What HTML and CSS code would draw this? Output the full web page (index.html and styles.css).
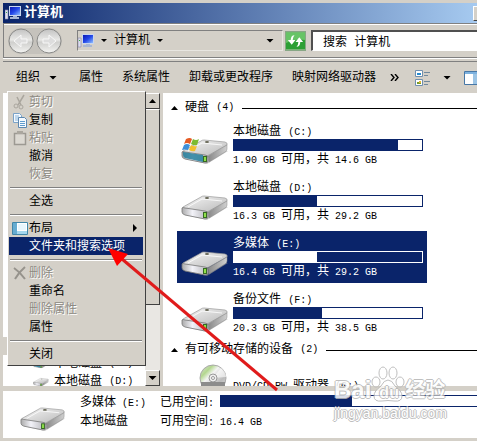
FILE: index.html
```html
<!DOCTYPE html>
<html lang="zh-CN">
<head>
<meta charset="utf-8">
<title>计算机</title>
<link rel="stylesheet" href="styles.css">
</head>
<body>
<svg class="defs" aria-hidden="true">
  <defs>
    <linearGradient id="top" x1="0" y1="0" x2="1" y2="1"><stop offset="0" stop-color="#f6f6f6"/><stop offset="1" stop-color="#b9b9b9"/></linearGradient>
    <linearGradient id="front" x1="0" y1="0" x2="1" y2="0"><stop offset="0" stop-color="#aaa"/><stop offset=".4" stop-color="#f2f2f8"/><stop offset="1" stop-color="#b4b4b8"/></linearGradient>
    <linearGradient id="side" x1="0" y1="0" x2="1" y2="0"><stop offset="0" stop-color="#888"/><stop offset="1" stop-color="#d0d0d0"/></linearGradient>
    <linearGradient id="screen" x1="0" y1="0" x2="1" y2="1"><stop offset="0" stop-color="#0b19b4"/><stop offset=".5" stop-color="#2448e8"/><stop offset="1" stop-color="#8fc0ff"/></linearGradient>
    <linearGradient id="round" x1="0" y1="0" x2="0" y2="1"><stop offset="0" stop-color="#c2c2c2"/><stop offset=".45" stop-color="#e8e8e6"/><stop offset=".55" stop-color="#cfcfcd"/><stop offset="1" stop-color="#f4f4f2"/></linearGradient>
    <linearGradient id="disc" x1="0" y1="0" x2="1" y2="1"><stop offset="0" stop-color="#ddd"/><stop offset=".25" stop-color="#b4d890"/><stop offset=".4" stop-color="#f4f4f4"/><stop offset=".7" stop-color="#bbb"/><stop offset="1" stop-color="#e4e4e4"/></linearGradient>
    <symbol id="drive" viewBox="0 0 48 26">
      <path d="M4 21l22 5 21-13-3 0-18 9z" fill="#999" opacity=".5"/>
      <path d="M2 13 20 3q1-1 3-1l21 2q3 1 2 3L28 17q-2 1-4 1L3 15q-2-1-1-2z" fill="url(#top)" stroke="#999" stroke-width=".7"/>
      <path d="M1 14q1-1 3 0l20 3q3 0 3 3v3q0 2-3 2L4 21q-3-1-3-3z" fill="url(#front)" stroke="#777" stroke-width=".8"/>
      <path d="M27 18 46 7v4q0 2-2 3L28 24z" fill="url(#side)" stroke="#888" stroke-width=".5"/>
      <path d="M7 13 21 5l20 2" fill="none" stroke="#fff" opacity=".8"/>
      <ellipse cx="26" cy="4" rx="2" ry="1" fill="#665"/>
      <path d="M22 18h4v6h-4z" fill="#356a22"/><path d="M23 19h2v4h-2z" fill="#8fe04a"/>
    </symbol>
    <symbol id="windrive" viewBox="0 0 48 26">
      <use href="#drive" width="48" height="26"/>
      <path d="M2 14l20 3v7L4 20q-2-1-2-3z" fill="#257f9c" opacity=".85"/>
      <path d="M5 1q4-2 6 0L9 6Q6 4 3 6z" fill="#e65b24"/><path d="M12 1q3 2 6 0l-2 6q-3 1-6-1z" fill="#7cbb32"/>
      <path d="M3 7q3-2 6 0l-2 5q-3-1-6 0z" fill="#3e8fd8"/><path d="M10 7q3 2 6 1l-2 5q-3 1-6-1z" fill="#f2c02e"/>
    </symbol>
    <symbol id="pc" viewBox="0 0 16 14">
      <path d="M0 4h3v9H0z" fill="#dde" stroke="#88a" stroke-width=".6"/><path d="M1 6h1v1H1z" fill="#3a4"/>
      <path d="M4 0h12v10H4z" fill="#c9d6ee"/><path d="M5 1h10v8H5z" fill="url(#screen)"/>
      <path d="M8 10h4v1h2v2H5v-2h3z" fill="#a9b7d2"/>
    </symbol>
  </defs>
</svg>
<div class="window">
  <header class="title">
    <svg class="pc"><use href="#pc"/></svg>
    <h1>计算机</h1>
    <button class="minimize" aria-label="最小化"></button>
  </header>

  <nav class="nav">
    <div class="history">
      <button aria-label="后退"><svg viewBox="0 0 26 26"><circle cx="13" cy="13" r="12" fill="url(#round)" stroke="#8b8b89"/><path d="M19 11h-6V7l-7 6 7 6v-4h6z" fill="#ddd" stroke="#f8f8f8"/></svg></button>
      <button aria-label="前进"><svg viewBox="0 0 26 26"><circle cx="13" cy="13" r="12" fill="url(#round)" stroke="#8b8b89"/><path d="M7 11h6V7l7 6-7 6v-4H7z" fill="#ddd" stroke="#f8f8f8"/></svg></button>
    </div>
    <div class="address">
      <svg class="pc"><use href="#pc"/></svg>
      <i class="caret small"></i>
      <a href="#">计算机</a>
      <i class="caret small"></i>
      <i class="caret last"></i>
    </div>
    <button class="refresh" aria-label="刷新">
      <svg viewBox="0 0 20 18"><path d="M0 0h20v18H0z" fill="#2c9f35"/><path d="M0 0h20v8Q10 6 0 11z" fill="#67c466"/><path d="M9 3Q5 3 5 8H2l4 5 4-5H7q0-3 2-5zM11 15q4 0 4-5h3l-4-5-4 5h3q0 3-2 5z" fill="#fff"/></svg>
    </button>
    <input class="search" aria-label="搜索" value="搜索 计算机">
  </nav>

  <div class="toolbar">
    <button class="organize">组织<i class="caret"></i></button>
    <button>属性</button>
    <button>系统属性</button>
    <button>卸载或更改程序</button>
    <button>映射网络驱动器</button>
    <button class="more" aria-label="更多"><svg viewBox="0 0 9 7"><path d="M1 0l3 3.500-3 3.500M5 0l3 3.500-3 3.500" fill="none" stroke="#000" stroke-width="1.400"/></svg></button>
    <button class="views" aria-label="更改视图">
      <svg viewBox="0 0 16 16"><path d="M.5.500h7v6h-7zM.5 9.500h7v6h-7z" fill="#fff" stroke="#6f8fae"/><path d="M2 3h4v2H2z" fill="#278bd0"/><path d="M2 12h4v2H2z" fill="#789c28"/><path d="M4 11h2v2H4z" fill="#e1b631"/><path d="M9 2.500h6M9 5.500h4M9 11.500h6M9 14.500h4" stroke="#71899d"/></svg>
      <i class="caret"></i>
    </button>
    <button class="preview" aria-label="预览窗格"><svg viewBox="0 0 16 14"><path d="M.5.500h15v13H.5z" fill="#fff" stroke="#4777a6"/><path d="M1 1h14v2H1z" fill="#7db2df"/><path d="M9 3h6v10H9z" fill="#9cc4e4"/></svg></button>
  </div>

  <div class="content">
    <aside class="side">
      <div class="tree">
        <div class="row current"></div>
        <div class="row"><svg><use href="#windrive"/></svg>本地磁盘 <span class="en">(C:)</span></div>
        <div class="row"><svg><use href="#drive"/></svg>本地磁盘 <span class="en">(D:)</span></div>
      </div>
      <div class="scrollbar">
        <button aria-label="向上滚动"><i class="caret up"></i></button>
        <div class="thumb"></div>
        <div class="track"></div>
        <button aria-label="向下滚动"><i class="caret"></i></button>
      </div>
      <div class="menu">
        <button disabled><svg viewBox="0 0 16 16"><path d="M12 1 6 11M5 3l4 8" stroke="#aaa69e" stroke-width="1.500"/><circle cx="4" cy="12" r="2" fill="none" stroke="#aaa69e"/><circle cx="9" cy="13" r="2" fill="none" stroke="#aaa69e"/></svg>剪切</button>
        <button><svg viewBox="0 0 16 16"><path d="M1.500 1.500h6l2 2v7h-8z" fill="#f5faff" stroke="#7ba3c8"/><path d="M3 4h4M3 6h4M3 8h4" stroke="#8ab5da"/><path d="M6.500 5.500h6l2 2v8h-8z" fill="#f5faff" stroke="#5d88b0"/><path d="M8 9.500h5M8 11.500h5M8 13.500h5" stroke="#5e9cce"/></svg>复制</button>
        <button disabled><svg viewBox="0 0 16 16"><path d="M2.500 3.500h11v11h-11z" fill="#dcd9d2" stroke="#9c9992" stroke-width="1.500"/><path d="M5 1h6v3H5z" fill="#aaa69e"/></svg>粘贴</button>
        <button>撤消</button>
        <button disabled>恢复</button>
        <hr>
        <button>全选</button>
        <hr>
        <button><svg viewBox="0 0 16 16"><path d="M.5 2.500h15v12H.5z" fill="#fff" stroke="#4186a8"/><path d="M1 3h4v11H1z" fill="#66acd1"/><path d="M5 11h10v3H5z" fill="#a5d7ee"/><path d="M6 4h8v6H6z" fill="#e8f6fd"/></svg>布局<i class="sub"></i></button>
        <button class="active">文件夹和搜索选项</button>
        <hr>
        <button disabled><svg viewBox="0 0 16 16"><path d="M2 3q6 4 11 11M13 2Q7 7 3 14" fill="none" stroke="#96938c" stroke-width="2"/></svg>删除</button>
        <button>重命名</button>
        <button disabled>删除属性</button>
        <button>属性</button>
        <hr>
        <button>关闭</button>
      </div>
    </aside>

    <main class="main">
      <h2><i class="caret up"></i>硬盘 <span class="en">(4)</span></h2>
      <ul class="drives">
        <li>
          <svg><use href="#windrive"/></svg>
          <div class="info"><p>本地磁盘 <span class="en">(C:)</span></p><div class="bar"><div style="width:87%"></div></div><p><span class="en">1.90 GB </span>可用，共<span class="en"> 14.6 GB</span></p></div>
        </li>
        <li>
          <svg><use href="#drive"/></svg>
          <div class="info"><p>本地磁盘 <span class="en">(D:)</span></p><div class="bar"><div style="width:44%"></div></div><p><span class="en">16.3 GB </span>可用，共<span class="en"> 29.2 GB</span></p></div>
        </li>
        <li class="selected">
          <svg><use href="#drive"/></svg>
          <div class="info"><p>多媒体 <span class="en">(E:)</span></p><div class="bar"><div style="width:44%"></div></div><p><span class="en">16.4 GB </span>可用，共<span class="en"> 29.2 GB</span></p></div>
        </li>
        <li>
          <svg><use href="#drive"/></svg>
          <div class="info"><p>备份文件 <span class="en">(F:)</span></p><div class="bar"><div style="width:47%"></div></div><p><span class="en">20.3 GB </span>可用，共<span class="en"> 38.5 GB</span></p></div>
        </li>
      </ul>
      <h2><i class="caret up"></i>有可移动存储的设备 <span class="en">(2)</span></h2>
      <div class="optical">
        <svg viewBox="0 0 28 28"><circle cx="14" cy="14" r="13" fill="url(#disc)" stroke="#aaa"/><path d="M14 14 22 4q5 4 5 9z" fill="#fff" opacity=".6"/><circle cx="14" cy="14" r="4" fill="#eee" stroke="#999"/><circle cx="14" cy="14" r="1.500" fill="#fff" stroke="#999"/><path d="M2 18h24v10H2z" fill="#8c8c8c"/></svg>
        <p><span class="en">DVD/CD-RW </span>驱动器<span class="en"> (G:)</span></p>
      </div>
    </main>
  </div>

  <footer class="details">
    <svg class="drive"><use href="#drive"/></svg>
    <div class="name"><p>多媒体<span class="en"> (E:)</span></p><p>本地磁盘</p></div>
    <div class="facts">
      <p>已用空间<span class="en">:</span></p><div class="bar"><div></div></div>
      <p>可用空间<span class="en">:</span></p><p class="en">16.4 GB</p>
    </div>
  </footer>

  <svg class="pointer" viewBox="0 0 170 144" aria-hidden="true"><path d="M14 11 169 142" stroke="#e01b1b" stroke-width="3"/><path d="M0 0 20 6 9 18z" fill="#f00"/></svg>

  <div class="watermark">
    <div class="brand"><span>Bai</span><span class="paw"><svg viewBox="0 0 34 37"><g fill="#fff" fill-opacity=".85" stroke="#b5b5b5"><ellipse cx="5" cy="16" rx="4" ry="5"/><ellipse cx="12" cy="7" rx="4" ry="6"/><ellipse cx="22" cy="7" rx="4" ry="6"/><ellipse cx="29" cy="16" rx="4" ry="5"/><path d="M17 14q4 0 7 6 7 5 7 10 0 6-8 5-6-1-12 0-8 1-8-5 0-5 7-10 3-6 7-6z"/></g></svg><b>du</b></span><span class="cn">经验</span></div>
    <div class="site">jingyan.baidu.com</div>
  </div>
</div>
</body>
</html>
```
FILE: styles.css
```css
* { box-sizing: border-box; }

body {
  margin: 0;
  background: #d4d0c8;
  color: #000;
  font: 12px/16px "Liberation Mono", "Noto Sans CJK SC", sans-serif;
}

h1, h2, p, ul { margin: 0; padding: 0; font-size: 12px; font-weight: normal; }
button { border: 0; padding: 0; background: none; color: inherit; font: inherit; white-space: nowrap; }
svg { display: block; flex: none; }
.defs { position: absolute; width: 0; height: 0; }
.en { font-size: 10px; white-space: pre; }

.window {
  position: relative;
  display: flex;
  flex-direction: column;
  height: 100vh;
  padding: 3px 0 3px 3px;
  overflow: hidden;
}

.caret {
  flex: none;
  width: 8px;
  height: 4px;
  background: #000;
  clip-path: polygon(0 0, 100% 0, 50% 100%);
}
.caret.small { width: 6px; height: 3px; }
.caret.up { width: 7px; clip-path: polygon(50% 0, 100% 100%, 0 100%); }
.pc { width: 16px; height: 14px; }

.title {
  display: flex;
  align-items: center;
  gap: 3px;
  flex: none;
  height: 20px;
  padding-left: 2px;
  background: linear-gradient(to right, #0a246a, #a6caf0);
  color: #fff;
}
.title h1 { font-size: 13px; font-weight: bold; line-height: 18px; }
.minimize {
  width: 4px;
  height: 15px;
  margin-left: auto;
  background: #d4d0c8;
  border: solid;
  border-width: 1px 0 1px 1px;
  border-color: #fff #404040 #404040 #fff;
}

.nav {
  display: flex;
  align-items: center;
  flex: none;
  height: 35px;
  padding-left: 4px;
  border: solid #808080;
  border-width: 1px 0 1px 1px;
  box-shadow: inset 0 1px #fff, 0 1px #fff;
}
.history {
  display: flex;
  gap: 2px;
  margin-right: 15px;
  border-radius: 13px;
  background: #c5c2bc;
}
.history svg { width: 26px; height: 26px; }
.address {
  display: flex;
  align-items: center;
  flex: 0 0 206px;
  height: 21px;
  gap: 7px;
  border: 1px solid;
  border-color: #808080 #e8e6e1 #e8e6e1 #808080;
}
.address a { color: inherit; text-decoration: none; }
.address .last { margin: 0 8px 0 auto; }
.refresh { margin: 0 5px 0 2px; border: 1px solid #87a785; }
.refresh svg { width: 19px; height: 18px; }
.search {
  flex: 1;
  min-width: 0;
  height: 21px;
  padding: 0 10px;
  border: solid;
  border-width: 2px 0 1px 2px;
  border-color: #505050 #fff #fff #505050;
  border-radius: 0;
  background: #fff;
  font: inherit;
}

.toolbar {
  display: flex;
  align-items: center;
  flex: none;
  gap: 19px;
  height: 32px;
  margin-top: 3px;
  padding-left: 13px;
  border-top: 1px solid #808080;
  line-height: 18px;
  overflow: hidden;
}
.organize { display: flex; align-items: center; gap: 9px; margin-right: 3px; }
.more { margin: 0 -3px 0 -5px; }
.more svg { width: 9px; height: 7px; }
.views { display: flex; align-items: center; gap: 12px; margin-right: -6px; }
.views svg { width: 16px; height: 16px; }
.preview svg { width: 16px; height: 14px; }
.preview, .views { flex: none; }

.content { display: flex; flex: 1; min-height: 0; }

.side { position: relative; display: flex; flex: 0 0 157px; }
.tree {
  display: flex;
  flex: 1;
  flex-direction: column;
  justify-content: flex-end;
  background: #fff;
  overflow: hidden;
}
.row {
  display: flex;
  align-items: center;
  flex: none;
  height: 18px;
  padding-left: 30px;
  white-space: pre;
}
.row:last-child { margin-bottom: -5px; }
.row svg { width: 16px; height: 12px; margin-right: 5px; }
.current { background: #d4d0c8; }

.scrollbar {
  display: flex;
  flex: 0 0 15px;
  flex-direction: column;
  background: #e9e7e3;
}
.scrollbar button, .thumb {
  background: #d4d0c8;
  border: 1px solid;
  border-color: #fff #404040 #404040 #fff;
}
.scrollbar button { display: grid; place-items: center; flex: 0 0 16px; }
.thumb { flex: 195; }
.track { flex: 66; }

.menu {
  position: absolute;
  z-index: 2;
  top: -2px;
  left: 4px;
  display: flex;
  flex-direction: column;
  width: 139px;
  padding: 1px 2px 2px 1px;
  background: #d4d0c8;
  border: 1px solid;
  border-color: #fff #404040 #404040 #fff;
}
.menu button {
  position: relative;
  height: 18px;
  padding: 1px 0 0 20px;
  text-align: left;
  line-height: 18px;
}
.menu button:disabled { color: #8c8982; text-shadow: 1px 1px #fff; }
.menu svg { position: absolute; top: 1px; left: 3px; width: 16px; height: 16px; }
.menu .active { background: #0a246a; color: #fff; }
.menu hr {
  width: 132px;
  height: 2px;
  margin: 4px 0 3px 1px;
  border: 0;
  border-top: 1px solid #808080;
  border-bottom: 1px solid #fff;
}
.sub {
  position: absolute;
  top: 5px;
  right: 6px;
  width: 4px;
  height: 8px;
  background: #000;
  clip-path: polygon(0 0, 100% 50%, 0 100%);
}

.main {
  flex: 1;
  min-width: 0;
  margin-left: 3px;
  padding: 7px 0 0 8px;
  background: #fff;
  overflow: hidden;
}
.main h2 { display: flex; align-items: center; height: 16px; white-space: pre; }
.main h2 .caret { margin-right: 7px; }
.main h2::after { content: ""; flex: 1; height: 1px; margin-left: 8px; background: #000; }
.drives {
  display: grid;
  gap: 4px;
  padding: 3px 0 3px 6px;
  list-style: none;
}
.drives li {
  display: flex;
  width: 250px;
  height: 52px;
  padding: 4px;
  gap: 4px;
}
.drives svg { width: 48px; height: 26px; margin-top: 15px; }
.drives .info { flex: 1; min-width: 0; white-space: pre; }
.drives p { height: 16px; line-height: 18px; }
.bar { height: 12px; border: 1px solid #0a246a; background: #fff; }
.bar div { height: 100%; background: #0a246a; }
.selected { background: #0a246a; color: #fff; }
.selected .bar { border-color: #fff; background: #0a246a; }
.selected .bar div { background: #fff; }
.optical { display: flex; gap: 6px; padding: 6px 0 0 28px; white-space: pre; }
.optical svg { width: 28px; height: 28px; }
.optical p { margin-top: 14px; }

.details {
  display: flex;
  flex: none;
  height: 47px;
  margin-top: 5px;
  background: #fff;
}
.details .drive { width: 46px; height: 25px; margin: 15px 14px 0 17px; }
.name { flex: 0 0 80px; padding-top: 3px; white-space: pre; line-height: 19px; }
.facts {
  display: grid;
  flex: 1;
  grid-template-columns: 60px 1fr;
  grid-auto-rows: 19px;
  padding-top: 3px;
  line-height: 19px;
}
.facts .bar { margin-top: 1px; border-right: 0; }
.facts .bar div { width: 51%; }

.pointer {
  position: absolute;
  z-index: 3;
  top: 248px;
  left: 108px;
  width: 170px;
  height: 144px;
}

.watermark {
  position: absolute;
  z-index: 4;
  top: 366px;
  left: 334px;
  color: #fff;
  font-family: "Liberation Sans", "Noto Sans CJK SC", sans-serif;
  text-shadow: 1px 0 #b5b5b5, -1px 0 #b5b5b5, 0 1px #b5b5b5, 0 -1px #b5b5b5;
  opacity: .85;
}
.brand {
  display: flex;
  align-items: flex-end;
  height: 37px;
  font-size: 24px;
  font-weight: bold;
  line-height: 26px;
}
.paw { position: relative; }
.paw svg { width: 34px; height: 37px; }
.paw b { position: absolute; bottom: 0; left: 8px; font-size: 16px; line-height: 20px; }
.cn { font-size: 20px; }
.site { font-size: 14px; line-height: 20px; }
```
